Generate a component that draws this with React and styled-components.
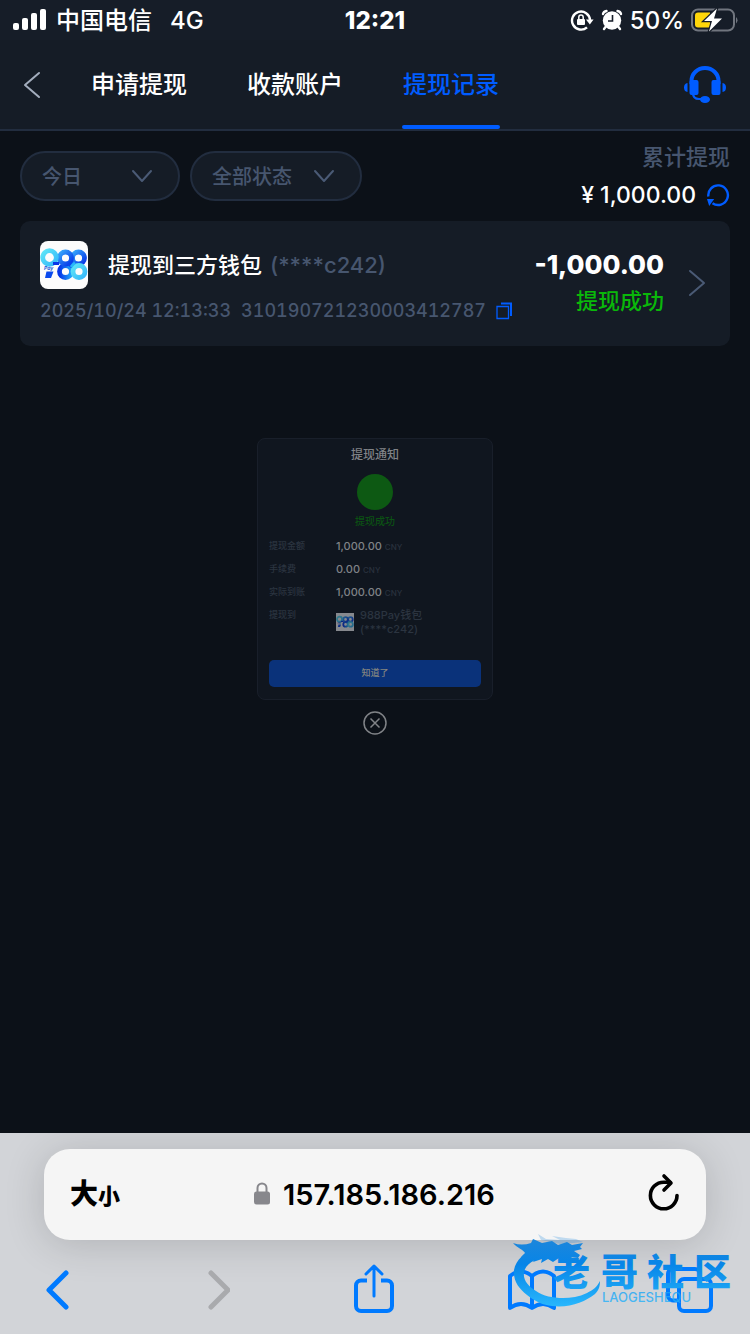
import React from "react";
import styled, { createGlobalStyle } from "styled-components";

const GlobalStyle = createGlobalStyle`
  * { box-sizing: border-box; }
  body {
    margin: 0;
    background: #0c1118;
    color: #ffffff;
    font-family: Inter, "Noto Sans CJK SC", sans-serif;
    font-size: 22px;
    font-weight: 500;
    line-height: 1.2;
  }
  button, select, input {
    font: inherit;
    color: inherit;
    margin: 0;
    padding: 0;
    border: 0;
    background: none;
  }
  button, select { cursor: pointer; }
  svg { display: block; flex: none; }
  h1, h2, p, dl, dd { margin: 0; font-size: inherit; font-weight: inherit; }
`;

const Screen = styled.div`
  display: flex;
  flex-direction: column;
  min-height: 100vh;
`;

const StatusBar = styled.div`
  display: grid;
  grid-template-columns: 1fr auto 1fr;
  align-items: center;
  height: 40px;
  padding: 2px 12px 0;
  background: #161d28;
  font-size: 24px;
`;

const StatusGroup = styled.div`
  display: flex;
  align-items: center;
  justify-content: ${(p) => (p.$end ? "flex-end" : "flex-start")};
  gap: ${(p) => (p.$end ? "6px" : "8px")};
`;

const Network = styled.span`
  margin-left: 10px;
`;

const Clock = styled.time`
  font-weight: 800;
`;

const Header = styled.header`
  display: flex;
  align-items: stretch;
  height: 91px;
  padding: 0 23px 0 22px;
  background: #151c26;
  border-bottom: 2px solid #222d3f;
`;

const IconButton = styled.button`
  display: flex;
  align-items: center;
  justify-content: ${(p) => p.$align || "center"};
  color: ${(p) => p.$color || "inherit"};
`;

const Tabs = styled.nav`
  display: flex;
  flex: 1;
  gap: 58px;
  padding-left: 48px;
`;

const Tab = styled.button`
  display: flex;
  flex-direction: column;
  align-items: center;
  justify-content: space-between;
  width: 98px;
  font-size: 24px;
  white-space: nowrap;
  color: ${(p) => (p.$active ? "#005cff" : "#ffffff")};
  &::before { content: ""; height: 6px; }
  &::after {
    content: "";
    width: 100%;
    height: 4px;
    border-radius: 2px;
    background: ${(p) => (p.$active ? "#005cff" : "transparent")};
  }
`;

const Main = styled.main`
  display: flex;
  flex: 1;
  flex-direction: column;
  padding: 0 20px 40px;
`;

const Toolbar = styled.div`
  display: flex;
  align-items: center;
  gap: 10px;
  height: 90px;
`;

const SelectBox = styled.label`
  position: relative;
  display: block;
  width: ${(p) => p.$width};
  svg {
    position: absolute;
    top: 18px;
    right: 27px;
    color: #4a5a75;
    pointer-events: none;
  }
`;

const Select = styled.select`
  width: 100%;
  height: 50px;
  padding: 2px 20px 0;
  appearance: none;
  border: 2px solid #222d3f;
  border-radius: 25px;
  background: #151c26;
  color: #47566f;
  font-size: 20px;
`;

const Total = styled.div`
  margin-left: auto;
  text-align: right;
  line-height: 38px;
`;

const TotalLabel = styled.p`
  color: #47566f;
`;

const TotalValue = styled.div`
  display: flex;
  align-items: center;
  justify-content: flex-end;
  gap: 10px;
  font-size: 23px;
`;

const Record = styled.article`
  display: flex;
  align-items: center;
  padding: 20px 24px 21px 20px;
  border-radius: 10px;
  background: #151c26;
`;

const RecordInfo = styled.div`
  flex: 1;
  min-width: 0;
`;

const RecordTitle = styled.h2`
  display: flex;
  align-items: center;
  gap: 8px;
  height: 48px;
  white-space: nowrap;
  svg { border-radius: 8px; margin-right: 12px; }
`;

const Muted = styled.span`
  color: #47566f;
`;

const RecordMeta = styled.div`
  display: flex;
  align-items: center;
  gap: 10px;
  margin-top: 8px;
  color: #47566f;
  font-size: 18px;
  font-variant-numeric: tabular-nums;
  line-height: 28px;
  white-space: nowrap;
`;

const RecordResult = styled.div`
  text-align: right;
  line-height: 36px;
  margin-right: 24px;
`;

const Amount = styled.p`
  font-size: 26px;
  font-weight: 800;
`;

const Success = styled.p`
  color: #0ab80a;
`;

const Notice = styled.section`
  display: flex;
  flex-direction: column;
  align-items: center;
  align-self: center;
  gap: 11px;
  margin-top: 92px;
  width: 236px;
  color: #808387;
`;

const NoticeCard = styled.div`
  display: flex;
  flex-direction: column;
  align-items: center;
  width: 100%;
  padding: 8px 11px 12px;
  border: 1px solid #191f2a;
  border-radius: 8px;
  background: #10161f;
`;

const NoticeTitle = styled.h2`
  font-size: 12px;
  line-height: 16px;
`;

const Dot = styled.div`
  width: 36px;
  height: 36px;
  margin: 11px 0 4px;
  border-radius: 50%;
  background: #0d5913;
`;

const NoticeState = styled.p`
  color: #0b5113;
  font-size: 10px;
  line-height: 14px;
`;

const Details = styled.dl`
  width: 100%;
  margin-top: 7px;
`;

const Detail = styled.div`
  display: grid;
  grid-template-columns: 67px 1fr;
  min-height: 23px;
  line-height: 22px;
`;

const Term = styled.dt`
  color: #2b3440;
  font-size: 9px;
`;

const Value = styled.dd`
  font-size: 11px;
  small { color: #29313d; font-size: 8px; }
`;

const Wallet = styled.dd`
  display: flex;
  align-items: center;
  gap: 6px;
  padding-top: 4px;
  color: #2b3440;
  font-size: 11px;
  line-height: 14px;
`;

const Confirm = styled.button`
  width: 100%;
  height: 27px;
  margin-top: 24px;
  border-radius: 5px;
  background: #0a327a;
  color: #848580;
  font-size: 9px;
`;

const Browser = styled.footer`
  position: relative;
  padding: 16px 30px 14px 28px;
  background: #d2d4d8;
  overflow: hidden;
  color: #000000;
`;

const AddressBar = styled.form`
  display: grid;
  grid-template-columns: 1fr auto 1fr;
  align-items: center;
  height: 91px;
  margin: 0 14px 20px 16px;
  padding: 0 26px;
  border-radius: 26px;
  background: #f5f5f5;
  box-shadow: 0 4px 40px rgba(0, 0, 0, 0.16);
`;

const TextSize = styled.button`
  justify-self: start;
  font-size: 28px;
  font-weight: 900;
  small { font-size: 22px; }
`;

const Address = styled.label`
  display: flex;
  align-items: center;
  gap: 12px;
`;

const AddressInput = styled.input`
  width: 214px;
  padding-top: 2px;
  font-size: 29px;
  font-weight: 600;
`;

const BrowserActions = styled.nav`
  display: flex;
  justify-content: space-between;
  color: #007aff;
`;

const BrowserAction = styled.button`
  display: flex;
  align-items: center;
  justify-content: center;
  width: 60px;
  height: 60px;
  &:disabled { color: #a9aaad; }
`;

const Watermark = styled.div`
  position: absolute;
  right: 10px;
  bottom: 20px;
  pointer-events: none;
`;

const Chevron = ({ d, width, height, stroke = 2 }) => (
  <svg width={width} height={height} fill="none" stroke="currentColor" strokeWidth={stroke} strokeLinecap="round" strokeLinejoin="round">
    <path d={d} />
  </svg>
);

const SignalIcon = () => (
  <svg width="36" height="24" viewBox="0 0 36 24" fill="#fff">
    <rect x="1" y="14" width="6" height="7" rx="2" />
    <rect x="10" y="9" width="6" height="12" rx="2" />
    <rect x="19" y="4" width="6" height="17" rx="2" />
    <rect x="28" y="0" width="6" height="21" rx="2" />
  </svg>
);

const RotationLockIcon = () => (
  <svg width="24" height="24" viewBox="0 0 24 24" fill="none">
    <path d="M17 18.300A9 9 0 1 1 20 11" stroke="#fff" strokeWidth="2.400" />
    <path d="M16 10.500h7.600L19.800 15.500z" fill="#fff" />
    <rect x="7" y="10" width="8" height="6" rx="1" fill="#fff" />
    <path d="M8.800 10V8.200a2.200 2.200 0 0 1 4.400 0V10" stroke="#fff" strokeWidth="1.500" />
  </svg>
);

const AlarmIcon = () => (
  <svg width="24" height="24" viewBox="0 0 24 24" fill="none">
    <circle cx="12" cy="11.500" r="9.200" fill="#fff" />
    <path d="M3 5Q3.500 2.500 6.500 2M21 5Q20.500 2.500 17.500 2M5.500 18 4 20M18.500 18l1.500 2" stroke="#fff" strokeWidth="2.400" strokeLinecap="round" />
    <path d="M12.500 6v6H8" stroke="#161d28" strokeWidth="1.600" />
  </svg>
);

const BatteryIcon = () => (
  <svg width="48" height="26" viewBox="0 0 48 26" fill="none">
    <rect x="2" y="1.500" width="42" height="21" rx="6" stroke="#70757e" strokeWidth="2" />
    <path d="M46 9q3 3 0 6.500z" fill="#70757e" />
    <path d="M8 4.500h12v15H8a3 3 0 0 1-3-3v-9a3 3 0 0 1 3-3z" fill="#ffd60a" />
    <path d="M27 .5 14 13h8l-3 10.500L32 10.500h-8z" fill="#fff" stroke="#161d28" strokeWidth="2.500" paintOrder="stroke" />
  </svg>
);

const HeadsetIcon = () => (
  <svg width="44" height="40" viewBox="0 0 44 40" fill="none">
    <path d="M8.500 19v-3a13.500 13 0 0 1 27 0v3" stroke="currentColor" strokeWidth="4" />
    <rect x="6.500" y="15" width="9" height="15" rx="2" fill="currentColor" />
    <rect x="28.500" y="15" width="9" height="15" rx="2" fill="currentColor" />
    <path d="M4.500 18v9Q1 26.500 1 22.500t3.500-4.500zM39.500 18v9q3.500-.5 3.500-4.500T39.500 18z" fill="currentColor" />
    <path d="M10 28q0 6 6 6h4" stroke="currentColor" strokeWidth="2.200" />
    <ellipse cx="22" cy="34.500" rx="5" ry="3.500" fill="currentColor" />
  </svg>
);

const RefreshIcon = () => (
  <svg width="24" height="24" viewBox="0 0 24 24" fill="none">
    <path d="M2.400 13.500A9.800 9.800 0 1 1 6.500 20.200" stroke="currentColor" strokeWidth="2.400" />
    <path d="M1 16h7.200L3.200 23z" fill="currentColor" />
  </svg>
);

const CopyIcon = () => (
  <svg width="16" height="18" viewBox="0 0 16 18" fill="none" stroke="currentColor">
    <path d="M1 4.500h11.500v12H1z" strokeWidth="1.300" />
    <path d="M5 1.500h10V14" strokeWidth="2" />
  </svg>
);

const WalletLogo = ({ size, dim }) => (
  <svg width={size} height={size} viewBox="0 0 48 48" fill="none" opacity={dim ? 0.5 : 1}>
    <defs>
      <linearGradient id="wallet-cyan" x1="0" y1="0" x2="1" y2="1">
        <stop offset="0" stopColor="#5de5f7" />
        <stop offset="1" stopColor="#36b8fa" />
      </linearGradient>
      <linearGradient id="wallet-blue" x1="0" y1="0" x2="1" y2="1">
        <stop offset="0" stopColor="#36a6fb" />
        <stop offset="1" stopColor="#0535e8" />
      </linearGradient>
      <linearGradient id="wallet-deep" x1="0" y1="0" x2="1" y2="0">
        <stop offset="0" stopColor="#0636e8" />
        <stop offset="1" stopColor="#20a8fa" />
      </linearGradient>
    </defs>
    <rect width="48" height="48" fill="#fcfcfc" />
    <g strokeWidth="4.800">
      <circle cx="25.500" cy="30.500" r="6" stroke="url(#wallet-deep)" />
      <circle cx="38.500" cy="17" r="6" stroke="url(#wallet-blue)" />
      <circle cx="25.500" cy="17" r="6" stroke="url(#wallet-blue)" />
      <path d="M29 22q3 3 6 4.500" stroke="#0a45ee" />
      <circle cx="39" cy="30.500" r="6" stroke="url(#wallet-cyan)" />
      <path d="M31 26q2-3 4-4" stroke="#28b7fa" strokeWidth="3" />
      <circle cx="9.500" cy="16.500" r="6.800" stroke="url(#wallet-cyan)" />
      <path d="M13 22.500h6" stroke="#0836e8" strokeWidth="3" />
    </g>
    <path d="M6.500 30.500h7l-2.500 6.500H5z" fill="#0949ed" />
    <text x="4" y="29" fontSize="5" fontWeight="700" fontStyle="italic" fill="#1659d9">Pay</text>
  </svg>
);

const CloseIcon = () => (
  <svg width="24" height="24" viewBox="0 0 24 24" fill="none" stroke="currentColor" strokeWidth="1.500">
    <circle cx="12" cy="12" r="11" />
    <path d="m7.500 7.500 9 9m0-9-9 9" />
  </svg>
);

const LockIcon = () => (
  <svg width="18" height="24" viewBox="0 0 18 24" fill="none">
    <rect x="1" y="9.500" width="16" height="13" rx="2.500" fill="#87878c" />
    <path d="M4.500 10V6a4.500 4.500 0 0 1 9 0v4" stroke="#87878c" strokeWidth="2" />
  </svg>
);

const ReloadIcon = () => (
  <svg width="32" height="44" viewBox="0 0 32 44" fill="none" stroke="currentColor" strokeWidth="3.600" strokeLinecap="round" strokeLinejoin="round">
    <path d="M29 22.500A13.300 13.300 0 1 1 15.700 9.200H22" />
    <path d="M16 3 23 10l-7 7" />
  </svg>
);

const ShareIcon = () => (
  <svg width="40" height="52" viewBox="0 0 40 52" fill="none" stroke="currentColor" strokeWidth="4">
    <path d="M13 16.500H7a5 5 0 0 0-5 5V42a5 5 0 0 0 5 5h26a5 5 0 0 0 5-5V21.500a5 5 0 0 0-5-5h-6" />
    <path d="M20 32V2M12 10l8-8 8 8" strokeWidth="3" strokeLinecap="round" strokeLinejoin="round" />
  </svg>
);

const BookIcon = () => (
  <svg width="48" height="44" viewBox="0 0 48 44" fill="none" stroke="currentColor" strokeWidth="4" strokeLinejoin="round">
    <path d="M24 8Q13-1 2 8v32q11-8 22 0Q35 32 46 40V8Q35-1 24 8zV40" />
  </svg>
);

const PagesIcon = () => (
  <svg width="48" height="48" viewBox="0 0 48 48" fill="none" stroke="currentColor" strokeWidth="4">
    <rect x="13" y="13" width="32" height="32" rx="5" />
    <path d="M11 34.500H7a5 5 0 0 1-5-5V8a5 5 0 0 1 5-5h22a5 5 0 0 1 5 5v4" />
  </svg>
);

const CommunityLogo = () => (
  <svg width="228" height="80" viewBox="0 0 228 80" fill="url(#community)">
    <defs>
      <linearGradient id="community" gradientUnits="userSpaceOnUse" x1="0" y1="8" x2="0" y2="72">
        <stop offset="0" stopColor="#1b86dc" />
        <stop offset="0.35" stopColor="#0785e8" />
        <stop offset="1" stopColor="#28b6fc" />
      </linearGradient>
    </defs>
    <path d="M24 15C12 18 4 26 2 36c-1 11 5 19 13 25 9 7 16 10 25 11 18 2 33-4 43-12 4-4 5-8 5-13-3 6-7 9-13 12-8 4-16 5-24 5-10 0-20-2-27-7-8-5-13-11-12-18 1-8 8-14 26-17z" />
    <path d="M1 9c6 2 12 2 18 0l2-4 9 4 10-2 6 4 9-3 5 3 11-2-3 4 2 2-8 2 6 4-2 3-9-1 1 3-11-2-6 4-5-3-7 4 1-4-9 3 3-5-12 4 6-6-9 2 4-4C12 16 5 14 1 9z" />
    <path d="m26 0 8 5 14 1-8-4 14 2 10 1 7 3-9 1-14 1-10-2-9-2z" opacity="0.25" />
    <g fontFamily="Noto Sans CJK SC, sans-serif" fontSize="37" fontWeight="900">
      <text x="41" y="52">老</text>
      <text x="89" y="52">哥</text>
      <text x="135" y="52">社</text>
      <text x="182" y="52">区</text>
    </g>
    <text x="90" y="68" fontFamily="Inter, sans-serif" fontSize="13" fontWeight="500" opacity="0.8">LAOGESHEQU</text>
  </svg>
);

const details = [
  ["提现金额", "1,000.00"],
  ["手续费", "0.00"],
  ["实际到账", "1,000.00"],
];

const tabs = ["申请提现", "收款账户", "提现记录"];

export default function App() {
  return (
    <Screen>
      <GlobalStyle />
      <StatusBar>
        <StatusGroup>
          <SignalIcon />
          <span>中国电信</span>
          <Network>4G</Network>
        </StatusGroup>
        <Clock>12:21</Clock>
        <StatusGroup $end>
          <RotationLockIcon />
          <AlarmIcon />
          <span>50%</span>
          <BatteryIcon />
        </StatusGroup>
      </StatusBar>

      <Header>
        <IconButton aria-label="返回" $color="#a3adbd">
          <Chevron d="M17 2 3 14l14 12" width={20} height={28} />
        </IconButton>
        <Tabs>
          {tabs.map((name) => (
            <Tab key={name} $active={name === "提现记录"}>{name}</Tab>
          ))}
        </Tabs>
        <IconButton aria-label="客服" $color="#005cff">
          <HeadsetIcon />
        </IconButton>
      </Header>

      <Main>
        <Toolbar>
          <SelectBox $width="160px">
            <Select aria-label="日期"><option>今日</option></Select>
            <Chevron d="M2 2 11 12 20 2" width={22} height={14} />
          </SelectBox>
          <SelectBox $width="172px">
            <Select aria-label="状态"><option>全部状态</option></Select>
            <Chevron d="M2 2 11 12 20 2" width={22} height={14} />
          </SelectBox>
          <Total>
            <TotalLabel>累计提现</TotalLabel>
            <TotalValue>
              <span>¥ 1,000.00</span>
              <IconButton aria-label="刷新" $color="#005cff"><RefreshIcon /></IconButton>
            </TotalValue>
          </Total>
        </Toolbar>

        <Record>
          <RecordInfo>
            <RecordTitle>
              <WalletLogo size={48} />
              <span>提现到三方钱包</span>
              <Muted>(****c242)</Muted>
            </RecordTitle>
            <RecordMeta>
              <time>2025/10/24 12:13:33</time>
              <span>310190721230003412787</span>
              <IconButton aria-label="复制" $color="#005cff"><CopyIcon /></IconButton>
            </RecordMeta>
          </RecordInfo>
          <RecordResult>
            <Amount>-1,000.00</Amount>
            <Success>提现成功</Success>
          </RecordResult>
          <IconButton aria-label="详情" $color="#4a5a75">
            <Chevron d="M2 2 16 14 2 26" width={18} height={28} />
          </IconButton>
        </Record>

        <Notice>
          <NoticeCard>
            <NoticeTitle>提现通知</NoticeTitle>
            <Dot />
            <NoticeState>提现成功</NoticeState>
            <Details>
              {details.map(([term, value]) => (
                <Detail key={term}>
                  <Term>{term}</Term>
                  <Value>{value} <small>CNY</small></Value>
                </Detail>
              ))}
              <Detail>
                <Term>提现到</Term>
                <Wallet>
                  <WalletLogo size={18} dim />
                  <span>988Pay钱包<br />(****c242)</span>
                </Wallet>
              </Detail>
            </Details>
            <Confirm>知道了</Confirm>
          </NoticeCard>
          <IconButton aria-label="关闭"><CloseIcon /></IconButton>
        </Notice>
      </Main>

      <Browser>
        <AddressBar onSubmit={(e) => e.preventDefault()}>
          <TextSize type="button">大<small>小</small></TextSize>
          <Address>
            <LockIcon />
            <AddressInput aria-label="网址" defaultValue="157.185.186.216" />
          </Address>
          <IconButton type="button" aria-label="重新载入" $align="flex-end"><ReloadIcon /></IconButton>
        </AddressBar>
        <BrowserActions>
          <BrowserAction aria-label="后退"><Chevron d="M20 3 3 20l17 17" width={24} height={40} stroke={5} /></BrowserAction>
          <BrowserAction aria-label="前进" disabled><Chevron d="M9 3 26 20 9 37" width={28} height={40} stroke={5} /></BrowserAction>
          <BrowserAction aria-label="共享"><ShareIcon /></BrowserAction>
          <BrowserAction aria-label="书签"><BookIcon /></BrowserAction>
          <BrowserAction aria-label="标签页"><PagesIcon /></BrowserAction>
        </BrowserActions>
        <Watermark><CommunityLogo /></Watermark>
      </Browser>
    </Screen>
  );
}
